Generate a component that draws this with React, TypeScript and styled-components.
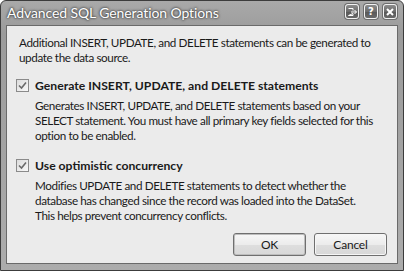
import React from 'react';
import styled, { createGlobalStyle } from 'styled-components';

const GlobalStyle = createGlobalStyle`
    html, body {
        margin: 0;
        padding: 0;
        background: #ffffff;
    }
    body {
        font-family: Lato, "Noto Sans", sans-serif;
    }
`

/** 整个窗口, 包括外框 */
const WindowStyled = styled.div`
    box-sizing: border-box;
    width: 404px;
    height: 271px;
    display: flex;
    flex-direction: column;
    border: 1px solid #3c3c3c;
    border-radius: 6px 6px 0 0;
    background: linear-gradient(180deg, #a9a9a9 0%, #9b9b9b 12%, #a4a4a4 60%, #acacac 100%);
    overflow: hidden;
`

const TitleBar = styled.div`
    height: 24px;
    display: flex;
    align-items: center;
    padding: 0 6px 0 6px;
    flex-shrink: 0;
`

const TitleText = styled.span`
    flex: 1;
    color: #ffffff;
    font-family: Lato, "Noto Sans", sans-serif;
    font-size: 14px;
    letter-spacing: -0.1px;
    text-shadow: 0 0 3px #3a3a3a, 0 0 2px #3a3a3a;
    margin-top: -1px;
`

const CaptionButtons = styled.div`
    display: flex;
    gap: 5px;
    margin-top: -3px;
`

const CaptionButton = styled.div`
    box-sizing: border-box;
    width: 14px;
    height: 15px;
    border: 1px solid #f2f2f2;
    border-radius: 3px;
    background: linear-gradient(180deg, #8c8c8c 0%, #6c6c6c 50%, #585858 51%, #6a6a6a 100%);
    box-shadow: 0 0 0 1px #6e6e6e;
    display: flex;
    align-items: center;
    justify-content: center;
    color: #ffffff;
    font-family: "DejaVu Sans", sans-serif;
    font-weight: bold;
    font-size: 10px;
    line-height: 1;
`

/** 窗口的客户区 */
const ClientArea = styled.div`
    flex: 1;
    margin: 0 5px 6px 5px;
    border: 1px solid #6a6a6a;
    background: #ebebeb;
    padding: 9px 12px 0 12px;
    display: flex;
    flex-direction: column;
    color: #1a1a1a;
    font-size: 11.7px;
    letter-spacing: -0.4px;
    line-height: 15px;
    white-space: nowrap;
`

const Paragraph = styled.p`
    margin: 0;
    padding-left: ${props => props.indent ? '16px' : '0'};
`

const OptionRow = styled.label`
    display: flex;
    align-items: center;
    gap: 6px;
    height: 15px;
    margin-top: ${props => props.top}px;
    margin-bottom: 5px;
    margin-left: -3px;
    font-weight: bold;
    font-size: 12.2px;
    letter-spacing: 0;
`

const CheckBox = styled.span`
    box-sizing: border-box;
    width: 13px;
    height: 13px;
    border: 1px solid #8a8a8a;
    background: linear-gradient(135deg, #dcdcdc 0%, #f8f8f8 100%);
    display: flex;
    align-items: center;
    justify-content: center;
`

const ButtonRow = styled.div`
    display: flex;
    justify-content: flex-end;
    gap: 8px;
    margin-top: auto;
    margin-bottom: 7px;
    margin-right: -2px;
`

const PushButton = styled.button`
    box-sizing: border-box;
    width: 73px;
    height: 23px;
    border: 1px solid #6f6f6f;
    border-radius: 3px;
    background: linear-gradient(180deg, #f7f7f7 0%, #ececec 50%, #dedede 51%, #d8d8d8 100%);
    box-shadow: ${props => props.primary ? 'inset 0 0 0 1px #bdbdbd' : 'inset 0 0 0 1px #f6f6f6'};
    font-family: Lato, "Noto Sans", sans-serif;
    font-size: 12px;
    letter-spacing: -0.2px;
    color: #1a1a1a;
    padding: 0;
`

function Check() {
    return (
        <CheckBox>
            <svg width="9" height="9" viewBox="0 0 9 9">
                <path d="M1 4.5 L3.5 7 L8 1.5" fill="none" stroke="#6a6a6a" strokeWidth="1.6" />
            </svg>
        </CheckBox>
    );
}

export default function App() {
    return (
        <>
            <GlobalStyle />
            <WindowStyled>
                <TitleBar>
                    <TitleText>Advanced SQL Generation Options</TitleText>
                    <CaptionButtons>
                        <CaptionButton>
                            <svg width="9" height="8" viewBox="0 0 9 8">
                                <path d="M0.5 0.5 H5 V2.5 M5 5.5 V7.5 H0.5 Z M3 4 H8.5 M6.5 2 L8.5 4 L6.5 6" fill="none" stroke="#fff" strokeWidth="1" />
                            </svg>
                        </CaptionButton>
                        <CaptionButton>?</CaptionButton>
                        <CaptionButton>
                            <svg width="8" height="8" viewBox="0 0 8 8">
                                <path d="M1 1 L7 7 M7 1 L1 7" stroke="#fff" strokeWidth="2" />
                            </svg>
                        </CaptionButton>
                    </CaptionButtons>
                </TitleBar>
                <ClientArea>
                    <Paragraph>
                        Additional INSERT, UPDATE, and DELETE statements can be generated to<br />
                        update the data source.
                    </Paragraph>
                    <OptionRow top={13}>
                        <Check />
                        Generate INSERT, UPDATE, and DELETE statements
                    </OptionRow>
                    <Paragraph indent>
                        Generates INSERT, UPDATE, and DELETE statements based on your<br />
                        SELECT statement. You must have all primary key fields selected for this<br />
                        option to be enabled.
                    </Paragraph>
                    <OptionRow top={15}>
                        <Check />
                        Use optimistic concurrency
                    </OptionRow>
                    <Paragraph indent>
                        Modifies UPDATE and DELETE statements to detect whether the<br />
                        database has changed since the record was loaded into the DataSet.<br />
                        This helps prevent concurrency conflicts.
                    </Paragraph>
                    <ButtonRow>
                        <PushButton primary>OK</PushButton>
                        <PushButton>Cancel</PushButton>
                    </ButtonRow>
                </ClientArea>
            </WindowStyled>
        </>
    );
}
